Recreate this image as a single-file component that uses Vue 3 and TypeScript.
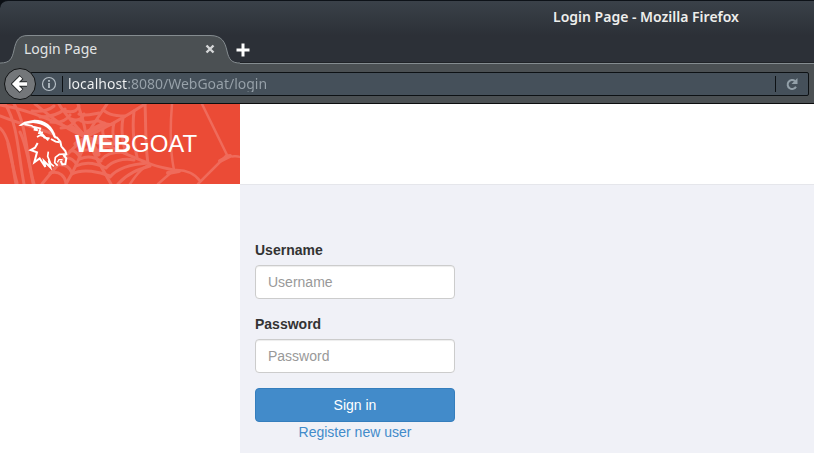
<script setup lang="ts">
import { ref } from 'vue'

const address = ref('localhost:8080/WebGoat/login')
const username = ref('')
const password = ref('')
</script>

<template>
  <div class="window">
    <header class="chrome">
      <div class="titlebar">Login Page - Mozilla Firefox</div>
      <div class="tabs">
        <svg class="tab-shape" width="240" height="29" viewBox="0 0 240 29" aria-hidden="true">
          <path d="M0 29V28C10 28 12 24 14 15C16 5 19 .5 28 .5H210C222 .5 225 7 227 16C229 25 232 28 240 28V29Z" fill="#4b5053" />
          <path d="M0 28C10 28 12 24 14 15C16 5 19 .5 28 .5H210C222 .5 225 7 227 16C229 25 232 28 240 28" fill="none" stroke="#858c90" />
        </svg>
        <div class="tab">
          <span>Login Page</span>
          <button class="icon-button" type="button" aria-label="Close tab">
            <svg width="10" height="10" viewBox="0 0 10 10"><path d="M1.500 1.500L8.500 8.500M8.500 1.500L1.500 8.500" stroke="#d5d7d8" stroke-width="2.400" /></svg>
          </button>
        </div>
        <button class="icon-button new-tab" type="button" aria-label="New tab">
          <svg width="14" height="14" viewBox="0 0 14 14"><path d="M7 .5V13.500M.5 7H13.500" stroke="#fff" stroke-width="3" /></svg>
        </button>
      </div>
      <div class="toolbar">
        <button class="back" type="button" aria-label="Back">
          <svg width="18" height="18" viewBox="0 0 18 18"><path d="M10.500 2L3.500 9L10.500 16M4 9H16" fill="none" stroke="#25282a" stroke-width="5.500" /><path d="M10 2.500L3.500 9L10 15.500M4 9H16" fill="none" stroke="#fff" stroke-width="3.600" /></svg>
        </button>
        <div class="address-bar">
          <svg class="info" width="16" height="16" viewBox="0 0 16 16" aria-hidden="true"><circle cx="8" cy="8" r="6.500" fill="none" stroke="#b5bec5" stroke-width="1.200" /><path d="M8 7V12M8 4V5.800" stroke="#b5bec5" stroke-width="1.800" /></svg>
          <input v-model="address" class="address" type="text" aria-label="Address">
          <button class="icon-button reload" type="button" aria-label="Reload">
            <svg width="14" height="14" viewBox="0 0 14 14"><path d="M10 4A4.500 4.500 0 1 0 11 9.800" fill="none" stroke="#93a0a9" stroke-width="2" /><path d="M12.500 1V7H6.500Z" fill="#93a0a9" /></svg>
          </button>
        </div>
      </div>
    </header>

    <div class="page">
      <div class="brand">
        <svg class="web" width="240" height="80" viewBox="0 0 240 80" aria-hidden="true">
          <g fill="none" stroke="#ef6b5b" stroke-linecap="round">
            <g stroke-width="3">
              <path d="M0 24C11 34 12 62 16 80M5 0C18 20 18 50 24 80M14 0C27 20 26 52 34 80M0 1C30 6 56 18 86 32M0 12C20 20 39 25 54 30" />
              <path d="M86 33C64 25 48 10 35 0M86 33C72 18 64 9 59 0M86 33C85 18 80 9 78 0M86 33C93 20 101 9 107 0M86 33C103 25 119 17 145 0M86 33C105 40 120 48 148 59C157 63 165 64 174 66M86 33C72 44 58 60 42 80M86 33C82 50 75 65 66 80M86 33C94 50 102 65 111 80" />
              <path d="M32 7C40 8 48 7 54 2M40 13C51 13 59 10 65 5M51 18C59 19 66 17 70 11M61 24C68 24 72 22 75 17M65 7C72 9 77 7 79 2M71 15C77 17 82 16 84 10M79 10C86 13 92 10 99 9M81 17C87 20 91 18 97 17M103 6C107 9 111 12 125 12M97 16C103 19 108 22 113 20" />
              <path d="M145 0C146 17 145 41 148 59M134 7C132 24 133 36 137 53M123 14C121 25 122 37 126 49M114 19C112 27 113 36 117 43M103 25C102 29 104 34 108 38" />
              <path d="M70 47C75 46 77 49 80 53M64 54C70 53 74 56 77 61M58 61C66 60 70 64 72 69M50 69C60 66 65 73 66 79M80 48C86 44 93 46 98 48M80 55C88 51 96 54 101 57M76 62C86 57 98 60 106 64M72 70C83 64 100 68 110 72M98 48C101 43 107 42 112 43M101 56C106 49 115 48 123 48M106 64C112 57 123 54 134 56M110 73C118 63 134 60 148 59M118 80C129 68 140 65 150 62" />
            </g>
            <g stroke-width="5">
              <path d="M72 24L82 30M76 40L87 34L98 38M88 28L104 20M84 40L80 49M92 40L98 50M100 34L112 40" />
              <path d="M20 28C27 42 29 60 33 79M8 40C11 54 14 68 17 79" stroke-width="3" />
            </g>
            <path stroke-width="2.500" d="M172 0C170 24 170 47 174 66L158 80M174 66C187 65 196 71 200 77M130 80C136 71 143 62 150 61M202 0L227 51L198 80M227 51C231 54 236 51 240 53" />
            <path stroke-width="4" d="M220 57L230 52M168 69L179 67" />
          </g>
        </svg>
        <svg class="goat" width="58" height="58" viewBox="0 0 174 174" aria-hidden="true">
          <path d="M10 32L28 20L58 14Q82 14 99 27Q116 41 124 68L116 67Q109 48 94 37Q76 25 54 24L32 27L18 33Z" fill="#fff" />
          <g fill="none" stroke="#fff" stroke-linejoin="miter">
            <path d="M28 28L50 32L68 46L56 44M50 34L76 40L72 54L84 52M72 46L88 64L76 61" stroke-width="5" />
            <path d="M66 66L80 58L88 68L104 70M84 62L100 76" stroke-width="5" />
            <path d="M118 66L126 68L136 80L139 94L151 108L154 118L147 122L154 130L151 147L142 148L137 138" stroke-width="6" />
            <path d="M108 72L122 80L134 82" stroke-width="6" />
            <path d="M152 117L133 118L121 127L119 143L128 152" stroke-width="5" />
            <path d="M143 134L132 134L127 142" stroke-width="4" />
            <path d="M68 84L60 98L47 105L66 112L58 142L74 130L91 156L87 138L106 157L101 136" stroke-width="6" />
            <path d="M100 110L98 124L107 146L117 154" stroke-width="5" />
          </g>
        </svg>
        <div class="brand-name"><b>WEB</b>GOAT</div>
      </div>
      <div class="page-header"></div>
      <aside class="sidebar"></aside>
      <main class="content">
        <form class="login" @submit.prevent>
          <div class="field">
            <label for="username">Username</label>
            <input id="username" v-model="username" type="text" placeholder="Username">
          </div>
          <div class="field">
            <label for="password">Password</label>
            <input id="password" v-model="password" type="password" placeholder="Password">
          </div>
          <button class="submit" type="submit">Sign in</button>
          <a class="register" href="#registration">Register new user</a>
        </form>
      </main>
    </div>
  </div>
</template>

<style>
body {
  margin: 0;
  background: #0b0f14;
}
</style>

<style scoped>
* {
  box-sizing: border-box;
}
.window {
  display: flex;
  flex-direction: column;
  min-height: 100vh;
  font-family: "Liberation Sans", Arial, sans-serif;
  font-size: 14px;
  line-height: 20px;
}
.chrome {
  overflow: hidden;
  border-top: 1px solid #0d1218;
  border-bottom: 1px solid #0c0d0e;
  border-top-left-radius: 8px;
  background: linear-gradient(#3a4149, #2c3037 34px);
  font-family: "Noto Sans", "Open Sans", sans-serif;
}
.titlebar {
  height: 34px;
  padding: 6px 0 0 553px;
  white-space: nowrap;
  color: #eeeeec;
  font-weight: 600;
}
.tabs {
  position: relative;
  display: flex;
  height: 29px;
  box-shadow: inset 0 -1px #858c90, inset 0 -2px #202327;
}
.tab-shape {
  position: absolute;
  inset: 0 auto auto 0;
}
.tab {
  position: relative;
  display: flex;
  align-items: center;
  justify-content: space-between;
  width: 236px;
  padding: 0 21px 2px 24px;
  color: #e2e4e5;
}
.icon-button {
  display: flex;
  align-items: center;
  padding: 0;
  border: 0;
  background: none;
}
.new-tab {
  position: relative;
}
.toolbar {
  display: flex;
  align-items: center;
  height: 39px;
  padding: 0 5px 0 4px;
  background: #4b5053;
}
.back {
  position: relative;
  display: flex;
  flex: none;
  align-items: center;
  justify-content: center;
  width: 32px;
  height: 32px;
  padding: 0;
  border: 1px solid #111314;
  border-radius: 50%;
  background: #74777a;
}
.address-bar {
  display: flex;
  flex: 1;
  align-items: center;
  min-width: 0;
  height: 24px;
  margin-left: -6px;
  padding-left: 10px;
  border: 1px solid #0d1114;
  border-radius: 2px;
  background: #45505a;
}
.info {
  flex: none;
}
.address {
  flex: 1;
  min-width: 0;
  height: 16px;
  margin-left: 5px;
  padding: 0 0 0 5px;
  border: 0;
  border-left: 1px solid #0d1114;
  outline: 0;
  background: linear-gradient(90deg, #f2f4f5 64px, #98a2aa 64px) text;
  color: transparent;
  font: 14px/16px "Noto Sans", "Open Sans", sans-serif;
}
.reload {
  justify-content: center;
  width: 33px;
  height: 16px;
  border-left: 1px solid #0d1114;
}
.page {
  display: grid;
  flex: 1;
  grid-template-columns: 240px 1fr;
  grid-template-rows: 80px 1fr;
  background: #fff;
}
.brand {
  position: relative;
  display: flex;
  align-items: center;
  padding-left: 15px;
  background: #eb4b36;
}
.web {
  position: absolute;
  inset: 0;
}
.goat {
  position: relative;
  flex: none;
}
.brand-name {
  position: relative;
  margin-left: 2px;
  color: #fff;
  font-size: 24px;
  line-height: 32px;
}
.content {
  padding: 55px 15px 8px;
  border-top: 1px solid #e5e6eb;
  background: #f0f1f7;
}
.login {
  display: flex;
  flex-direction: column;
  width: 200px;
}
.field {
  display: flex;
  flex-direction: column;
  gap: 5px;
  margin-bottom: 15px;
}
label {
  color: #333;
  font-weight: 700;
}
.field input {
  width: 100%;
  height: 34px;
  padding: 6px 12px;
  border: 1px solid #ccc;
  border-radius: 4px;
  background: #fff;
  box-shadow: inset 0 1px 1px rgba(0, 0, 0, 0.075);
  color: #555;
  font: inherit;
}
.field input::placeholder {
  color: #999;
}
.submit {
  height: 34px;
  padding: 0;
  border: 1px solid #357ebd;
  border-radius: 4px;
  background: #428bca;
  color: #fff;
  font: inherit;
}
.register {
  align-self: center;
  color: #428bca;
  text-decoration: none;
}
</style>
